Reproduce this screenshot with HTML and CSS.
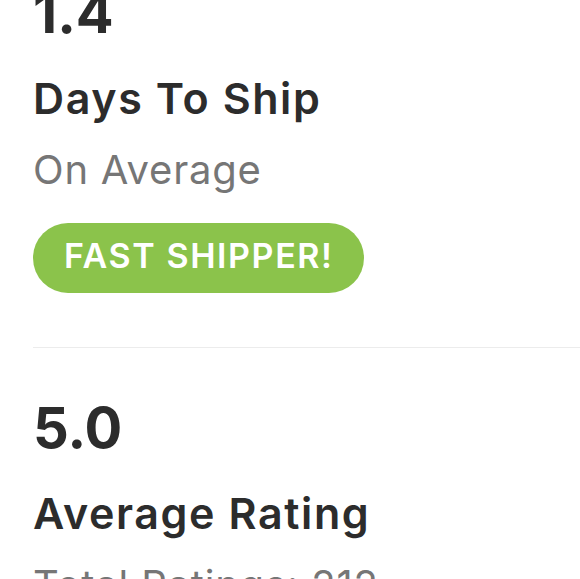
FILE: index.html
```html
<!DOCTYPE html>
<html lang="en">
<head>
<meta charset="utf-8">
<title>Shop stats</title>
<link rel="stylesheet" href="styles.css">
</head>
<body>
<main class="stats">
  <section class="stat">
    <p class="stat-value">1.4</p>
    <h2 class="stat-title">Days To Ship</h2>
    <p class="stat-sub">On Average</p>
    <span class="badge">FAST SHIPPER!</span>
  </section>
  <hr class="divider">
  <section class="stat stat-second">
    <p class="stat-value">5.0</p>
    <h2 class="stat-title">Average Rating</h2>
    <p class="stat-sub">Total Ratings: 212</p>
  </section>
</main>
</body>
</html>
```

FILE: styles.css
```css
html, body {
  margin: 0;
  padding: 0;
  background: #ffffff;
  overflow: hidden;
}
body {
  font-family: "Inter", "Open Sans", sans-serif;
  color: #2c2c2c;
}
.stats {
  margin-top: -17px;
  padding-left: 33px;
}
.stat {
  display: flex;
  flex-direction: column;
  align-items: flex-start;
}
.stat-value {
  margin: 0;
  font-size: 56px;
  line-height: 60px;
  font-weight: 700;
  color: #2c2c2c;
}
.stat-title {
  margin: 29px 0 0;
  font-size: 43px;
  line-height: 52px;
  font-weight: 600;
  letter-spacing: 1.6px;
  color: #2c2c2c;
}
.stat-sub {
  margin: 22px 0 0;
  font-size: 40px;
  line-height: 48px;
  font-weight: 400;
  letter-spacing: 0.8px;
  color: #767676;
}
.badge {
  margin-top: 29px;
  display: inline-block;
  box-sizing: border-box;
  height: 70px;
  padding: 0 30px 4px 31px;
  line-height: 66px;
  border-radius: 35px;
  background: #8bc34b;
  color: #ffffff;
  font-size: 34px;
  font-weight: 600;
  letter-spacing: 1.6px;
}
.divider {
  margin: 54px 0 0;
  border: 0;
  height: 1px;
  background: #ececec;
}
.stat-second {
  margin-top: 50px;
}
```
